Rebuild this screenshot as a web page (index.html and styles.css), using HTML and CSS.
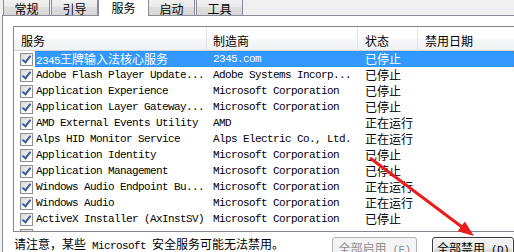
FILE: index.html
```html
<!DOCTYPE html>
<html lang="zh-CN">
<head>
    <meta charset="UTF-8">
    <title>系统配置 - 服务</title>
    <link rel="stylesheet" href="styles.css">
</head>
<body>
<div class="window">
    <!-- Tab strip -->
    <div class="tabs">
        <div class="tab zh">常规</div>
        <div class="tab zh">引导</div>
        <div class="tab on zh">服务</div>
        <div class="tab zh">启动</div>
        <div class="tab zh">工具</div>
    </div>

    <div class="panel">
        <div class="list">
            <div class="head zh">
                <div>服务</div>
                <div>制造商</div>
                <div>状态</div>
                <div>禁用日期</div>
            </div>

            <div class="row sel">
                <div class="check"><span class="cb"></span></div>
                <div class="cells"><span>2345<span class="zh">王牌输入法核心服务</span></span><span>2345.com</span><span class="zh">已停止</span><span></span></div>
            </div>
            <div class="row">
                <div class="check"><span class="cb"></span></div>
                <div class="cells"><span>Adobe Flash Player Update...</span><span>Adobe Systems Incorp...</span><span class="zh">已停止</span><span></span></div>
            </div>
            <div class="row">
                <div class="check"><span class="cb"></span></div>
                <div class="cells"><span>Application Experience</span><span>Microsoft Corporation</span><span class="zh">已停止</span><span></span></div>
            </div>
            <div class="row">
                <div class="check"><span class="cb"></span></div>
                <div class="cells"><span>Application Layer Gateway...</span><span>Microsoft Corporation</span><span class="zh">已停止</span><span></span></div>
            </div>
            <div class="row">
                <div class="check"><span class="cb"></span></div>
                <div class="cells"><span>AMD External Events Utility</span><span>AMD</span><span class="zh">正在运行</span><span></span></div>
            </div>
            <div class="row">
                <div class="check"><span class="cb"></span></div>
                <div class="cells"><span>Alps HID Monitor Service</span><span>Alps Electric Co., Ltd.</span><span class="zh">正在运行</span><span></span></div>
            </div>
            <div class="row">
                <div class="check"><span class="cb"></span></div>
                <div class="cells"><span>Application Identity</span><span>Microsoft Corporation</span><span class="zh">已停止</span><span></span></div>
            </div>
            <div class="row">
                <div class="check"><span class="cb"></span></div>
                <div class="cells"><span>Application Management</span><span>Microsoft Corporation</span><span class="zh">已停止</span><span></span></div>
            </div>
            <div class="row">
                <div class="check"><span class="cb"></span></div>
                <div class="cells"><span>Windows Audio Endpoint Bu...</span><span>Microsoft Corporation</span><span class="zh">正在运行</span><span></span></div>
            </div>
            <div class="row">
                <div class="check"><span class="cb"></span></div>
                <div class="cells"><span>Windows Audio</span><span>Microsoft Corporation</span><span class="zh">正在运行</span><span></span></div>
            </div>
            <div class="row">
                <div class="check"><span class="cb"></span></div>
                <div class="cells"><span>ActiveX Installer (AxInstSV)</span><span>Microsoft Corporation</span><span class="zh">已停止</span><span></span></div>
            </div>
            <!-- next row, scrolled mostly out of view -->
            <div class="row">
                <div class="check"><span class="cb"></span></div>
            </div>
        </div>

        <div class="foot">
            <p class="note"><span class="zh">请注意，某些</span> Microsoft <span class="zh">安全服务可能无法禁用。</span></p>
            <button class="btn" disabled><span class="zh">全部启用</span> (E)</button>
            <button class="btn main"><span class="zh">全部禁用</span> (D)</button>
        </div>
    </div>

    <!-- red annotation arrow -->
    <svg class="arrow" width="514" height="252" viewBox="0 0 514 252">
        <line x1="370" y1="158" x2="462" y2="227" stroke="#ec1c1c" stroke-width="3"/>
        <polygon points="474,236 457.6,231.2 464.8,221.6" fill="#ec1c1c"/>
    </svg>
</div>
</body>
</html>
```

FILE: styles.css
```css
body {
    margin: 0;
    background: #f0f0f0;
    color: #000;
    font-family: "Liberation Mono", "Noto Sans CJK SC", monospace;
    font-size: 11px;
    letter-spacing: -0.6px;
}

.window {
    position: relative;
    width: 514px;
    height: 252px;
    overflow: hidden;
}

.zh {
    font-family: "Noto Sans CJK SC", sans-serif;
    font-size: 12px;
    letter-spacing: 0;
}

/* Tabs */
.tabs {
    display: flex;
    align-items: flex-end;
    height: 17px;
    margin-top: -2px;
    padding-left: 3px;
}

.tab {
    box-sizing: border-box;
    width: 47px;
    height: 17px;
    margin-right: 1px;
    padding-top: 3px;
    line-height: 14px;
    text-align: center;
    border: 1px solid #898c95;
    border-bottom: 0;
    border-radius: 2px 2px 0 0;
    background: linear-gradient(#f3f3f3, #e8e8e8 50%, #dedede 51%, #d6d6d6);
}

.tab.on {
    position: relative;
    z-index: 1;
    width: 51px;
    height: 19px;
    margin: 0 -1px -1px -1px;
    padding-top: 3px;
    line-height: 13px;
    background: #fff;
}

/* Panel */
.panel {
    width: 600px;
    height: 300px;
    margin-left: 2px;
    padding: 10px 0 0 10px;
    border-top: 1px solid #898c95;
    border-left: 1px solid #898c95;
    background: #fff;
}

.list {
    height: 204px;
    border: 1px solid #828790;
    overflow: hidden;
}

.head {
    display: grid;
    grid-template-columns: 193px 151px 60px 1fr;
    box-sizing: border-box;
    height: 24px;
    border-bottom: 1px solid #d5d5d5;
    background: linear-gradient(#ffffff, #ffffff 50%, #f6f7f8 51%, #f1f2f4);
}

.head div {
    padding-left: 7px;
    line-height: 27px;
    border-right: 1px solid #e3e5e8;
}

.head div:nth-child(2) {
    padding-left: 6px;
}

.row {
    display: flex;
    height: 16px;
    line-height: 16px;
}

.check {
    flex: none;
    box-sizing: border-box;
    width: 21px;
    padding: 2px 0 0 6px;
}

.cb {
    position: relative;
    display: block;
    box-sizing: border-box;
    width: 13px;
    height: 13px;
    border: 1px solid #8f8f8f;
    background: linear-gradient(135deg, #d8d8d8, #f4f4f4 60%, #ffffff);
}

.cb::after {
    content: "";
    position: absolute;
    left: 3px;
    top: 0;
    width: 3px;
    height: 7px;
    border: solid #3f5a9a;
    border-width: 0 2px 2px 0;
    transform: rotate(38deg);
}

.cells {
    flex: 1;
    display: grid;
    grid-template-columns: 172px 151px 60px 1fr;
    white-space: nowrap;
}

.cells > span {
    overflow: hidden;
}

.cells > span:nth-child(1) {
    padding-left: 1px;
}

.cells > span:nth-child(2) {
    padding-left: 6px;
}

.cells > span:nth-child(3) {
    padding-left: 7px;
}

.row.sel .cells {
    background: #3399ff;
    color: #fff;
    outline: 1px dotted #cc6600;
    outline-offset: -1px;
}

/* Footer */
.foot {
    display: flex;
    align-items: flex-start;
    padding-top: 5px;
}

.note {
    flex: none;
    box-sizing: border-box;
    width: 319px;
    margin: 0;
    padding-left: 1px;
    line-height: 14px;
}

.btn {
    box-sizing: border-box;
    width: 85px;
    height: 23px;
    margin: 0 15px 0 0;
    padding: 0;
    border: 1px solid #707070;
    border-radius: 3px;
    background: linear-gradient(#f2f2f2, #ebebeb 50%, #dddddd 51%, #cfcfcf);
    color: #000;
    font: inherit;
    letter-spacing: inherit;
    line-height: 19px;
}

.btn:disabled {
    border-color: #adb2b5;
    background: #f4f4f4;
    color: #8d8d8d;
}

.btn.main {
    width: 82px;
    border-color: #3a3a3a;
    box-shadow: inset 0 0 0 1px #fafafa;
}

.arrow {
    position: absolute;
    left: 0;
    top: 0;
}
```
